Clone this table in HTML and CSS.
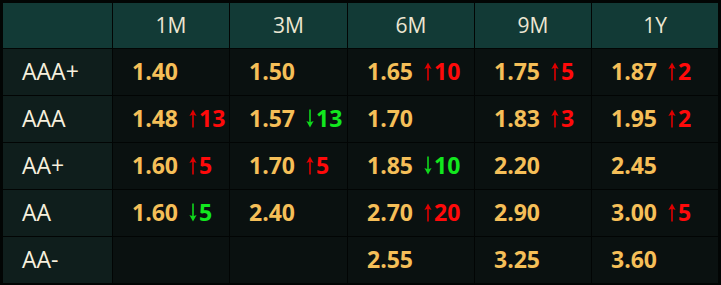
FILE: index.html
```html
<!DOCTYPE html>
<html lang="en">
<head>
<meta charset="utf-8">
<title>Rating curve</title>
<link rel="stylesheet" href="styles.css">
</head>
<body>
<div class="board">
  <div class="cell head corner"></div>
  <div class="cell head">1M</div>
  <div class="cell head">3M</div>
  <div class="cell head">6M</div>
  <div class="cell head">9M</div>
  <div class="cell head">1Y</div>

  <div class="cell label">AAA+</div>
  <div class="cell data"><span class="val">1.40</span></div>
  <div class="cell data"><span class="val">1.50</span></div>
  <div class="cell data"><span class="val">1.65</span><span class="chg up"><svg class="arrow" viewBox="0 0 8 18"><path d="M4 0 L7.6 6.6 L4.8 5.4 L4.8 18 L3.2 18 L3.2 5.4 L0.4 6.6 Z"/></svg>10</span></div>
  <div class="cell data"><span class="val">1.75</span><span class="chg up"><svg class="arrow" viewBox="0 0 8 18"><path d="M4 0 L7.6 6.6 L4.8 5.4 L4.8 18 L3.2 18 L3.2 5.4 L0.4 6.6 Z"/></svg>5</span></div>
  <div class="cell data"><span class="val">1.87</span><span class="chg up"><svg class="arrow" viewBox="0 0 8 18"><path d="M4 0 L7.6 6.6 L4.8 5.4 L4.8 18 L3.2 18 L3.2 5.4 L0.4 6.6 Z"/></svg>2</span></div>

  <div class="cell label">AAA</div>
  <div class="cell data"><span class="val">1.48</span><span class="chg up"><svg class="arrow" viewBox="0 0 8 18"><path d="M4 0 L7.6 6.6 L4.8 5.4 L4.8 18 L3.2 18 L3.2 5.4 L0.4 6.6 Z"/></svg>13</span></div>
  <div class="cell data"><span class="val">1.57</span><span class="chg down"><svg class="arrow" viewBox="0 0 8 18"><path d="M4 18 L7.6 11.4 L4.8 12.6 L4.8 0 L3.2 0 L3.2 12.6 L0.4 11.4 Z"/></svg>13</span></div>
  <div class="cell data"><span class="val">1.70</span></div>
  <div class="cell data"><span class="val">1.83</span><span class="chg up"><svg class="arrow" viewBox="0 0 8 18"><path d="M4 0 L7.6 6.6 L4.8 5.4 L4.8 18 L3.2 18 L3.2 5.4 L0.4 6.6 Z"/></svg>3</span></div>
  <div class="cell data"><span class="val">1.95</span><span class="chg up"><svg class="arrow" viewBox="0 0 8 18"><path d="M4 0 L7.6 6.6 L4.8 5.4 L4.8 18 L3.2 18 L3.2 5.4 L0.4 6.6 Z"/></svg>2</span></div>

  <div class="cell label">AA+</div>
  <div class="cell data"><span class="val">1.60</span><span class="chg up"><svg class="arrow" viewBox="0 0 8 18"><path d="M4 0 L7.6 6.6 L4.8 5.4 L4.8 18 L3.2 18 L3.2 5.4 L0.4 6.6 Z"/></svg>5</span></div>
  <div class="cell data"><span class="val">1.70</span><span class="chg up"><svg class="arrow" viewBox="0 0 8 18"><path d="M4 0 L7.6 6.6 L4.8 5.4 L4.8 18 L3.2 18 L3.2 5.4 L0.4 6.6 Z"/></svg>5</span></div>
  <div class="cell data"><span class="val">1.85</span><span class="chg down"><svg class="arrow" viewBox="0 0 8 18"><path d="M4 18 L7.6 11.4 L4.8 12.6 L4.8 0 L3.2 0 L3.2 12.6 L0.4 11.4 Z"/></svg>10</span></div>
  <div class="cell data"><span class="val">2.20</span></div>
  <div class="cell data"><span class="val">2.45</span></div>

  <div class="cell label">AA</div>
  <div class="cell data"><span class="val">1.60</span><span class="chg down"><svg class="arrow" viewBox="0 0 8 18"><path d="M4 18 L7.6 11.4 L4.8 12.6 L4.8 0 L3.2 0 L3.2 12.6 L0.4 11.4 Z"/></svg>5</span></div>
  <div class="cell data"><span class="val">2.40</span></div>
  <div class="cell data"><span class="val">2.70</span><span class="chg up"><svg class="arrow" viewBox="0 0 8 18"><path d="M4 0 L7.6 6.6 L4.8 5.4 L4.8 18 L3.2 18 L3.2 5.4 L0.4 6.6 Z"/></svg>20</span></div>
  <div class="cell data"><span class="val">2.90</span></div>
  <div class="cell data"><span class="val">3.00</span><span class="chg up"><svg class="arrow" viewBox="0 0 8 18"><path d="M4 0 L7.6 6.6 L4.8 5.4 L4.8 18 L3.2 18 L3.2 5.4 L0.4 6.6 Z"/></svg>5</span></div>

  <div class="cell label">AA-</div>
  <div class="cell data"></div>
  <div class="cell data"></div>
  <div class="cell data"><span class="val">2.55</span></div>
  <div class="cell data"><span class="val">3.25</span></div>
  <div class="cell data"><span class="val">3.60</span></div>
</div>
</body>
</html>
```

FILE: styles.css
```css
html, body {
  margin: 0;
  padding: 0;
  background: #000;
}

body {
  width: 721px;
  height: 285px;
  overflow: hidden;
  font-family: "Open Sans", "Noto Sans", sans-serif;
}

.board {
  display: grid;
  grid-template-columns: 109px 116px 117px 126px 116px 126px;
  grid-template-rows: 45px repeat(5, 46px);
  gap: 1px;
  padding: 3px 3px 2px 3px;
  background: #020504;
}

.cell {
  display: flex;
  align-items: center;
  background: #0a1110;
}

.head {
  justify-content: center;
  background: #123a36;
  color: #ece6d2;
  font-size: 21px;
  font-weight: 400;
  padding-bottom: 1px;
}

.label {
  background: #0f1e1c;
  color: #f6f0de;
  font-size: 23px;
  padding-left: 19px;
  padding-bottom: 2px;
}

.data {
  padding-left: 19px;
  font-size: 23px;
  font-weight: 700;
  padding-bottom: 2px;
}

.val {
  color: #f5bf58;
}

.chg {
  display: inline-flex;
  align-items: center;
  margin-left: 11px;
}

.chg.up {
  color: #ff0a0a;
}

.chg.down {
  color: #12e81e;
}

.arrow {
  width: 8px;
  height: 19px;
  margin-right: 2px;
  margin-top: 1px;
  fill: currentColor;
}

.up .arrow {
  fill: #e00000;
}

.down .arrow {
  fill: #10d81c;
}
```
